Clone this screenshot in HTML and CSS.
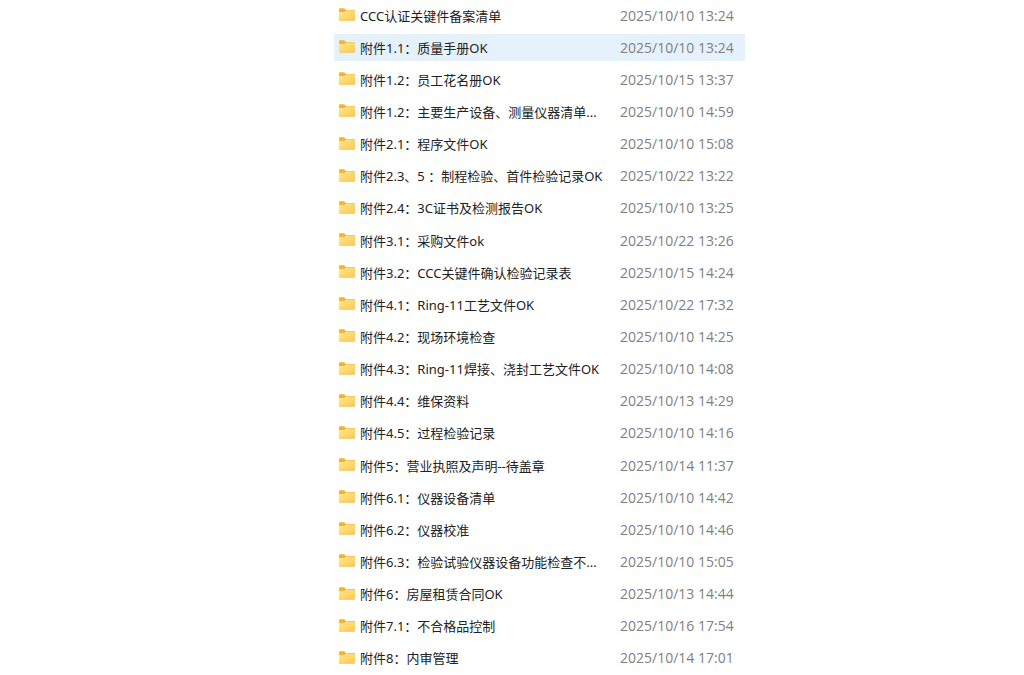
FILE: index.html
```
<!DOCTYPE html>
<html lang="zh-CN">
<head>
    <meta charset="UTF-8">
    <meta name="viewport" content="width=device-width, initial-scale=1.0">
    <title>附件清单</title>
    <link rel="stylesheet" href="styles.css">
</head>
<body>
    <svg class="sprite" aria-hidden="true">
        <linearGradient id="front" x1="0" y1="0" x2="1" y2="1">
            <stop offset="0" stop-color="#ffe596"/>
            <stop offset="1" stop-color="#fcca4c"/>
        </linearGradient>
        <symbol id="folder" viewBox="0 0 16 13">
            <path d="M0 1.2Q0 .3 1 .3H5.2L7 2H15Q16 2 16 3V7H0Z" fill="#f2b531"/>
            <path d="M0 4H5.4L7 2.6H15.2Q16 2.6 16 3.4V11.7Q16 12.6 15 12.6H1Q0 12.6 0 11.7Z" fill="url(#front)"/>
            <path d="M.3 12.2H15.7" stroke="#f3bd48" stroke-width=".7"/>
        </symbol>
    </svg>
    <main class="explorer">
        <table class="files">
            <tbody id="file-list"></tbody>
        </table>
    </main>
    <script src="files.js"></script>
</body>
</html>
```
FILE: styles.css
```
* {
    box-sizing: border-box;
}

body {
    margin: 0;
    background: #fff;
    font-family: "Noto Sans", "Noto Sans CJK SC", sans-serif;
    font-size: 13px;
    line-height: 20px;
    color: #222;
}

.sprite {
    position: absolute;
    width: 0;
    height: 0;
}

.explorer {
    display: grid;
    grid-template-columns: minmax(411px, 40%);
    justify-content: center;
    padding-left: 55px;
}

.files {
    width: 100%;
    height: 100vh;
    border-collapse: separate;
    border-spacing: 0;
    table-layout: fixed;
}

.files td {
    padding: 0;
    border: solid transparent;
    border-width: 2px 0 3px;
    background-clip: padding-box;
    vertical-align: middle;
    white-space: nowrap;
}

.files .active td {
    background-color: #e5f2fd;
}

.files .name {
    padding-left: 5px;
}

.files .date {
    width: 125px;
    font-family: "Open Sans", sans-serif;
    font-size: 14px;
    color: #808080;
}

.entry {
    display: flex;
    align-items: center;
    gap: 5px;
}

.icon {
    flex: none;
    width: 16px;
    height: 13px;
    margin-bottom: 2px;
}
```
FILE: files.js
```
const files = [
    ['CCC认证关键件备案清单', '2025/10/10 13:24'],
    ['附件1.1：质量手册OK', '2025/10/10 13:24'],
    ['附件1.2：员工花名册OK', '2025/10/15 13:37'],
    ['附件1.2：主要生产设备、测量仪器清单...', '2025/10/10 14:59'],
    ['附件2.1：程序文件OK', '2025/10/10 15:08'],
    ['附件2.3、5 ：制程检验、首件检验记录OK', '2025/10/22 13:22'],
    ['附件2.4：3C证书及检测报告OK', '2025/10/10 13:25'],
    ['附件3.1：采购文件ok', '2025/10/22 13:26'],
    ['附件3.2：CCC关键件确认检验记录表', '2025/10/15 14:24'],
    ['附件4.1：Ring-11工艺文件OK', '2025/10/22 17:32'],
    ['附件4.2：现场环境检查', '2025/10/10 14:25'],
    ['附件4.3：Ring-11焊接、浇封工艺文件OK', '2025/10/10 14:08'],
    ['附件4.4：维保资料', '2025/10/13 14:29'],
    ['附件4.5：过程检验记录', '2025/10/10 14:16'],
    ['附件5：营业执照及声明--待盖章', '2025/10/14 11:37'],
    ['附件6.1：仪器设备清单', '2025/10/10 14:42'],
    ['附件6.2：仪器校准', '2025/10/10 14:46'],
    ['附件6.3：检验试验仪器设备功能检查不...', '2025/10/10 15:05'],
    ['附件6：房屋租赁合同OK', '2025/10/13 14:44'],
    ['附件7.1：不合格品控制', '2025/10/16 17:54'],
    ['附件8：内审管理', '2025/10/14 17:01']
];
const activeIndex = 1;

document.getElementById('file-list').innerHTML = files.map(([name, date], i) => `
    <tr${i === activeIndex ? ' class="active"' : ''}>
        <td class="name">
            <div class="entry">
                <svg class="icon" aria-hidden="true"><use href="#folder"/></svg>
                <span>${name}</span>
            </div>
        </td>
        <td class="date">${date}</td>
    </tr>`).join('');
```
